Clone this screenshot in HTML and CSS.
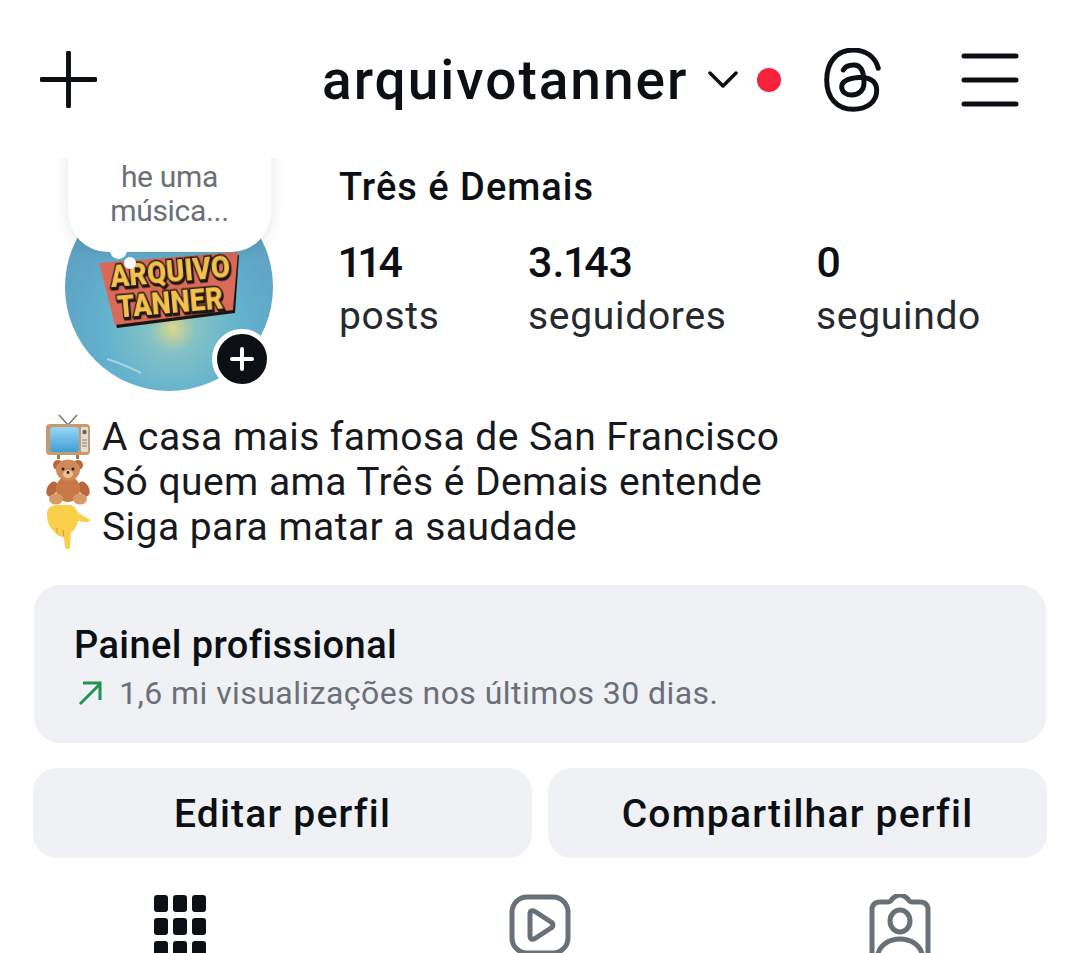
FILE: index.html
```html
<!DOCTYPE html>
<html lang="pt-BR">
<head>
    <meta charset="UTF-8">
    <meta name="viewport" content="width=device-width, initial-scale=1.0">
    <title>arquivotanner</title>
    <link rel="stylesheet" href="styles.css">
</head>
<body>
    <div class="page">
        <div class="top-bar">
            <svg class="icon-plus" viewBox="0 0 58 58"><path d="M29 2V56M2 29H56"/></svg>
            <div class="account">
                <span class="username">arquivotanner</span>
                <svg class="icon-chevron" viewBox="0 0 30 20"><path d="M2 3L15 16L28 3"/></svg>
                <span class="red-dot"></span>
            </div>
            <svg class="icon-threads" viewBox="0 0 60 66"><path d="M55.3 20.3C52 8 42 2 30.3 2C13 2 3.7 15 3.7 32C3.7 50 14 61.3 30.3 61.3C44 61.3 53.7 54 53.7 42C53.7 33 46 28.7 36 29.5C25 30.3 18.7 33 18.7 38.7C18.7 44 23 47 28.7 47C36 47 41 42 41 35.3C41 24 38 17 31 17C26 17 22 18.5 20.3 22"/></svg>
            <svg class="icon-menu" viewBox="0 0 58 54"><path d="M3 3H55M3 27H55M3 51H55"/></svg>
        </div>

        <div class="profile">
            <div class="avatar-col">
                <div class="avatar">
                    <svg class="avatar-logo" viewBox="0 0 208 208">
                        <path class="logo-shine" d="M42 176C52 179 64 184 76 190"/>
                        <polygon class="logo-shadow" points="36,83 174,72 170,130 52,145"/>
                        <polygon class="logo-plate" points="34,80 173,69 168,127 50,142"/>
                        <text class="logo-text" x="106" y="99" textLength="120" lengthAdjust="spacingAndGlyphs" transform="rotate(-5 106 99)">ARQUIVO</text>
                        <text class="logo-text" x="106" y="130" textLength="106" lengthAdjust="spacingAndGlyphs" transform="rotate(-5 106 130)">TANNER</text>
                    </svg>
                </div>
                <div class="note">
                    <span>he uma</span>
                    <span>música...</span>
                </div>
                <span class="note-dot"></span>
                <span class="note-dot small"></span>
                <div class="add-badge">
                    <svg viewBox="0 0 24 24"><path d="M12 2V22M2 12H22"/></svg>
                </div>
            </div>
            <div class="info">
                <div class="name">Três é Demais</div>
                <div class="stats">
                    <div class="stat stat-posts"><strong>114</strong><span>posts</span></div>
                    <div class="stat stat-followers"><strong>3.143</strong><span>seguidores</span></div>
                    <div class="stat"><strong>0</strong><span>seguindo</span></div>
                </div>
            </div>
        </div>

        <div class="bio">
            <div class="bio-line">
                <svg class="emoji" viewBox="0 0 46 46">
                    <defs>
                        <linearGradient id="tv-screen" x1="0" y1="0" x2="0" y2="1">
                            <stop offset="0" stop-color="#9ad6f2"/>
                            <stop offset="1" stop-color="#3f9fd8"/>
                        </linearGradient>
                    </defs>
                    <path class="tv-ant" d="M14 1L23 11L32 1"/>
                    <rect x="12" y="38" width="3" height="7" fill="#a5764a"/>
                    <rect x="31" y="38" width="3" height="7" fill="#a5764a"/>
                    <rect x="1" y="10" width="44" height="31" rx="4" fill="#c49a70"/>
                    <rect x="5" y="13" width="29" height="25" rx="4" fill="url(#tv-screen)"/>
                    <rect x="36" y="13" width="7" height="25" rx="1" fill="#e6dccb"/>
                    <circle cx="39.5" cy="18" r="2.2" fill="#5d6670"/>
                    <path d="M37 26H42M37 29H42M37 32H42" stroke="#7b7f85" stroke-width="1"/>
                </svg>
                <span>A casa mais famosa de San Francisco</span>
            </div>
            <div class="bio-line">
                <svg class="emoji" viewBox="0 0 46 46">
                    <circle cx="13" cy="6" r="5" fill="#b8683a"/>
                    <circle cx="33" cy="6" r="5" fill="#b8683a"/>
                    <ellipse cx="7" cy="30" rx="5" ry="8" fill="#b8683a" transform="rotate(25 7 30)"/>
                    <ellipse cx="39" cy="30" rx="5" ry="8" fill="#b8683a" transform="rotate(-25 39 30)"/>
                    <ellipse cx="23" cy="30" rx="12" ry="13" fill="#c77a48"/>
                    <ellipse cx="11" cy="40" rx="7" ry="5.5" fill="#d9996a"/>
                    <ellipse cx="35" cy="40" rx="7" ry="5.5" fill="#d9996a"/>
                    <ellipse cx="23" cy="11" rx="12" ry="10.5" fill="#d08a58"/>
                    <ellipse cx="23" cy="15" rx="5" ry="4" fill="#eec19a"/>
                    <circle cx="18" cy="10" r="1.5" fill="#2a1a12"/>
                    <circle cx="28" cy="10" r="1.5" fill="#2a1a12"/>
                    <circle cx="23" cy="13.5" r="1.4" fill="#2a1a12"/>
                </svg>
                <span>Só quem ama Três é Demais entende</span>
            </div>
            <div class="bio-line">
                <svg class="emoji" viewBox="0 0 46 46">
                    <path d="M2 9C2 3 8 1 14 1H25C29 1 31 5 33 9L44 15C46 17 43 19 40 18L33 17C32 23 29 27 26 28L25 43C25 46 21 46 20 43L19 33C12 33 10 28 7 25C3 22 2 15 2 9Z" fill="#fad04a"/>
                    <path d="M19 33L18 26M12 29L12 24" stroke="#d99c20" stroke-width="1" fill="none"/>
                </svg>
                <span>Siga para matar a saudade</span>
            </div>
        </div>

        <div class="dashboard">
            <div class="dashboard-title">Painel profissional</div>
            <div class="dashboard-sub">
                <svg class="icon-trend" viewBox="0 0 26 26"><path d="M3 24L23 4M6 3H23V20"/></svg>
                <span>1,6 mi visualizações nos últimos 30 dias.</span>
            </div>
        </div>

        <div class="actions">
            <div class="action-btn">Editar perfil</div>
            <div class="action-btn">Compartilhar perfil</div>
        </div>

        <div class="tabs">
            <div class="tab">
                <div class="grid-icon">
                    <i></i><i></i><i></i><i></i><i></i><i></i><i></i><i></i><i></i>
                </div>
            </div>
            <div class="tab">
                <svg class="tab-icon" viewBox="0 0 62 62"><rect x="3" y="3" width="56" height="56" rx="15"/><path d="M21 20C21 17 23 16 26 17.500L42 28C44.500 29.500 44.500 32.500 42 34L26 44.500C23 46 21 45 21 42Z"/></svg>
            </div>
            <div class="tab">
                <svg class="tab-icon" viewBox="0 0 62 62"><path d="M3 60V16C3 11 6 8 11 8H19C21 8 22 7 23 5L27 2C29 1 33 1 35 2L39 5C40 7 41 8 43 8H51C56 8 59 11 59 16V60"/><ellipse cx="31" cy="27" rx="10" ry="11"/><path d="M9 60C11 51 20 45 31 45C42 45 51 51 53 60"/></svg>
            </div>
        </div>
    </div>
</body>
</html>
```

FILE: styles.css
```css
:root {
    --text-color: #0c1014;
    --muted-color: #6a7078;
    --soft-bg: #eff1f5;
}

* {
    margin: 0;
    padding: 0;
    box-sizing: border-box;
}

html, body {
    height: 953px;
    overflow: hidden;
}

body {
    font-family: 'Roboto', sans-serif;
    background-color: #fff;
    color: var(--text-color);
}

.page {
    width: 1079px;
}

/* top bar */
.top-bar {
    position: relative;
    z-index: 3;
    height: 158px;
    background-color: #fff;
    display: flex;
    align-items: flex-start;
    padding: 51px 0 0 40px;
}

.icon-plus {
    width: 57px;
    height: 57px;
    fill: none;
    stroke: var(--text-color);
    stroke-width: 5;
    stroke-linecap: round;
}

.account {
    display: flex;
    align-items: center;
    width: 458px;
    margin-left: 225px;
    height: 58px;
}

.username {
    font-size: 55px;
    font-weight: 500;
    line-height: 58px;
    letter-spacing: 2px;
}

.icon-chevron {
    width: 30px;
    height: 20px;
    margin-left: 19px;
    flex-shrink: 0;
    fill: none;
    stroke: var(--text-color);
    stroke-width: 3.500;
    stroke-linecap: round;
    stroke-linejoin: round;
}

.red-dot {
    width: 24px;
    height: 24px;
    flex-shrink: 0;
    border-radius: 50%;
    background-color: #f5213f;
    margin-left: 19px;
}

.icon-threads {
    width: 60px;
    height: 66px;
    margin: -3px 0 0 43px;
    fill: none;
    stroke: var(--text-color);
    stroke-width: 5;
    stroke-linecap: round;
}

.icon-menu {
    width: 58px;
    height: 54px;
    margin: 2px 0 0 78px;
    fill: none;
    stroke: var(--text-color);
    stroke-width: 5;
    stroke-linecap: round;
}

/* avatar and counters */
.profile {
    display: flex;
    height: 233px;
}

.avatar-col {
    position: relative;
    width: 339px;
    flex-shrink: 0;
}

.avatar {
    position: absolute;
    left: 65px;
    top: 25px;
    width: 208px;
    height: 208px;
    border-radius: 50%;
    background: radial-gradient(circle at 52% 70%, #dcd68c 0, #84c2c6 13%, #62b2ce 38%, #5f9fc2 72%, #7d93ad 100%);
    overflow: hidden;
}

.avatar-logo {
    width: 208px;
    height: 208px;
    display: block;
}

.logo-shine {
    fill: none;
    stroke: #a9d3de;
    stroke-width: 2;
}

.logo-shadow {
    fill: #1a1512;
}

.logo-plate {
    fill: #da6a58;
}

.logo-text {
    font-family: 'Roboto', sans-serif;
    font-weight: 900;
    font-size: 32px;
    text-anchor: middle;
    fill: #f2c14e;
    stroke: #2a1a12;
    stroke-width: 3;
    paint-order: stroke;
    filter: drop-shadow(1px 2px 0 #1a1512);
}

.note {
    position: absolute;
    left: 68px;
    top: -40px;
    width: 203px;
    height: 134px;
    border-radius: 40px;
    background-color: #fff;
    box-shadow: 0 2px 14px rgba(0,0,0,0.1);
    display: flex;
    flex-direction: column;
    justify-content: flex-end;
    align-items: center;
    padding-bottom: 24px;
    font-size: 30px;
    letter-spacing: -0.3px;
    line-height: 34px;
    color: var(--muted-color);
}

.note-dot {
    position: absolute;
    left: 110px;
    top: 84px;
    width: 17px;
    height: 17px;
    border-radius: 50%;
    background-color: #fff;
}

.note-dot.small {
    left: 124px;
    top: 99px;
    width: 12px;
    height: 12px;
}

.add-badge {
    position: absolute;
    left: 212px;
    top: 171px;
    width: 60px;
    height: 60px;
    border-radius: 50%;
    background-color: var(--text-color);
    border: 5px solid #fff;
    display: flex;
    align-items: center;
    justify-content: center;
}

.add-badge svg {
    width: 24px;
    height: 24px;
    fill: none;
    stroke: #fff;
    stroke-width: 4;
    stroke-linecap: round;
}

.name {
    font-size: 38px;
    font-weight: 500;
    line-height: 42px;
    letter-spacing: 1px;
    margin-top: 8px;
}

.stats {
    display: flex;
    margin-top: 29px;
}

.stat {
    display: flex;
    flex-direction: column;
}

.stat-posts {
    width: 189px;
}

.stat-followers {
    width: 288px;
}

.stat strong {
    font-size: 43px;
    font-weight: 500;
    line-height: 50px;
    font-variant-numeric: proportional-nums;
}

.stat span {
    font-size: 39px;
    line-height: 54px;
    letter-spacing: 0.7px;
    margin-top: 2px;
    color: #26292e;
}

/* bio */
.bio {
    margin-top: 23px;
    padding-left: 45px;
}

.bio-line {
    display: flex;
    align-items: center;
    height: 45px;
    font-size: 39px;
    letter-spacing: 0.45px;
    color: #17191d;
}

.emoji {
    width: 46px;
    height: 46px;
    flex-shrink: 0;
    margin-right: 11px;
}

.tv-ant {
    fill: none;
    stroke: #6f7478;
    stroke-width: 1.500;
}

/* professional dashboard */
.dashboard {
    height: 158px;
    margin: 36px 33px 0 34px;
    padding: 36px 40px 0;
    background-color: var(--soft-bg);
    border-radius: 26px;
}

.dashboard-title {
    font-size: 38px;
    font-weight: 500;
    line-height: 48px;
    letter-spacing: 0.4px;
}

.dashboard-sub {
    display: flex;
    align-items: center;
    margin-top: 2px;
    font-size: 32px;
    letter-spacing: 0.45px;
    line-height: 44px;
    color: var(--muted-color);
}

.icon-trend {
    width: 26px;
    height: 26px;
    margin: 0 16px 0 3px;
    fill: none;
    stroke: #23914f;
    stroke-width: 3;
}

/* buttons */
.actions {
    display: flex;
    gap: 16px;
    margin: 25px 32px 0 33px;
}

.action-btn {
    flex: 1;
    height: 90px;
    padding-top: 2px;
    background-color: var(--soft-bg);
    border-radius: 24px;
    display: flex;
    align-items: center;
    justify-content: center;
    font-size: 39px;
    letter-spacing: 1.2px;
    font-weight: 500;
}

/* tabs */
.tabs {
    display: grid;
    grid-template-columns: repeat(3, 360px);
    margin-top: 37px;
}

.tab {
    display: flex;
    justify-content: center;
}

.grid-icon {
    display: grid;
    grid-template-columns: repeat(3, 14px);
    grid-auto-rows: 17px;
    gap: 6px 5px;
}

.grid-icon i {
    background-color: var(--text-color);
    border-radius: 3px;
}

.tab-icon {
    width: 62px;
    height: 62px;
    margin-top: -1px;
    fill: none;
    stroke: var(--muted-color);
    stroke-width: 5;
    stroke-linejoin: round;
}
```
